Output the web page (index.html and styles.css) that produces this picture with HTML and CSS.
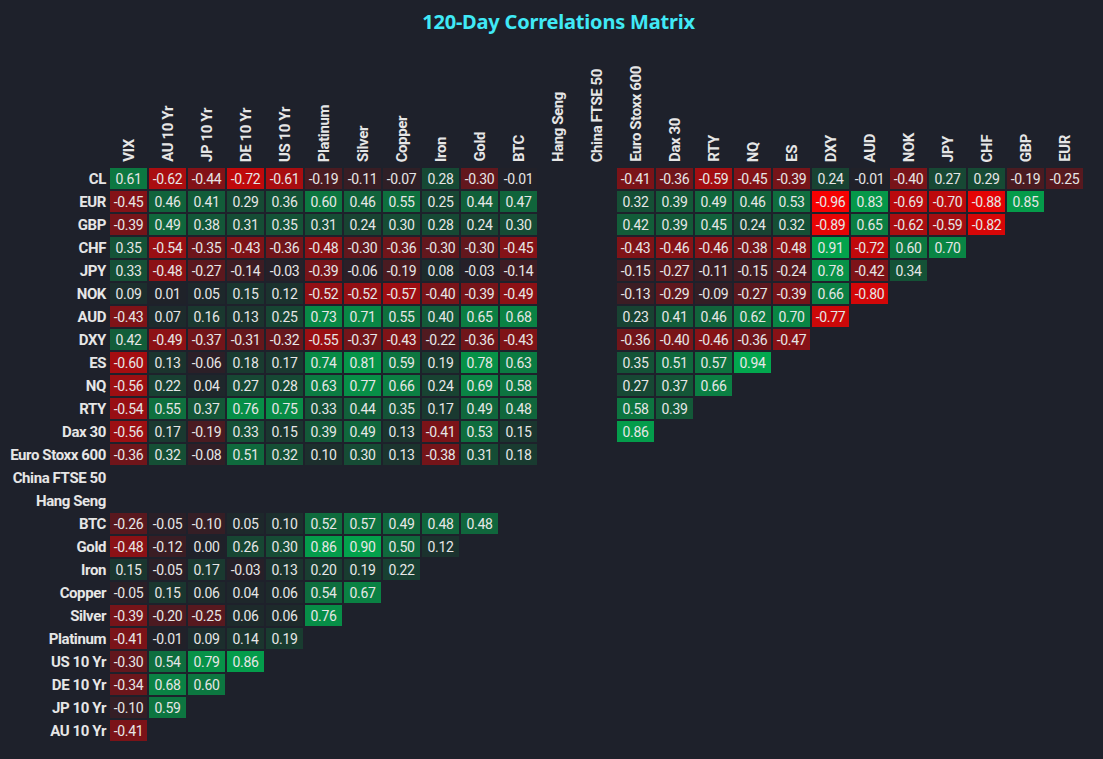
FILE: index.html
```html
<!DOCTYPE html>
<html lang="en">
<head>
<meta charset="utf-8">
<title>120-Day Correlations Matrix</title>
<link rel="stylesheet" href="styles.css">
</head>
<body>
<h1 class="title">120-Day Correlations Matrix</h1>
<div class="matrix" id="matrix"></div>
<script src="script.js"></script>
</body>
</html>
```

FILE: styles.css
```css
body {
  margin: 0;
  background: #1e212b;
  font-family: Roboto, "Liberation Sans", sans-serif;
  color: #e6e6e6;
}
.title {
  margin: 10px 0 0;
  padding-left: 14px;
  text-align: center;
  font-family: "Noto Sans", "Liberation Sans", sans-serif;
  font-weight: 700;
  font-size: 20px;
  line-height: 24px;
  letter-spacing: -0.2px;
  color: #40e9f6;
}
.matrix {
  display: grid;
  grid-template-columns: 108px repeat(25, 37px);
  grid-template-rows: 132px;
  grid-auto-rows: 21px;
  gap: 2px;
}
.col-head {
  display: flex;
  align-items: flex-end;
  justify-content: center;
  padding-bottom: 4px;
}
.col-head span {
  writing-mode: vertical-rl;
  transform: rotate(180deg);
  font-weight: 700;
  font-size: 15px;
  letter-spacing: -0.4px;
  white-space: nowrap;
  color: #e6e6e6;
}
.row-head {
  display: flex;
  align-items: center;
  justify-content: flex-end;
  padding-right: 2px;
  font-weight: 700;
  font-size: 15px;
  letter-spacing: -0.4px;
  white-space: nowrap;
  color: #e6e6e6;
}
.cell {
  display: flex;
  align-items: center;
  justify-content: center;
  font-size: 14px;
  letter-spacing: -0.3px;
  color: #e6e6e6;
}
```

FILE: script.js
```javascript
(function () {
  var cols = ["VIX","AU 10 Yr","JP 10 Yr","DE 10 Yr","US 10 Yr","Platinum","Silver","Copper","Iron","Gold","BTC","Hang Seng","China FTSE 50","Euro Stoxx 600","Dax 30","RTY","NQ","ES","DXY","AUD","NOK","JPY","CHF","GBP","EUR"];
  var n = null;
  var rows = [
    ["CL", [0.61,-0.62,-0.44,-0.72,-0.61,-0.19,-0.11,-0.07,0.28,-0.30,-0.01,n,n,-0.41,-0.36,-0.59,-0.45,-0.39,0.24,-0.01,-0.40,0.27,0.29,-0.19,-0.25]],
    ["EUR", [-0.45,0.46,0.41,0.29,0.36,0.60,0.46,0.55,0.25,0.44,0.47,n,n,0.32,0.39,0.49,0.46,0.53,-0.96,0.83,-0.69,-0.70,-0.88,0.85]],
    ["GBP", [-0.39,0.49,0.38,0.31,0.35,0.31,0.24,0.30,0.28,0.24,0.30,n,n,0.42,0.39,0.45,0.24,0.32,-0.89,0.65,-0.62,-0.59,-0.82]],
    ["CHF", [0.35,-0.54,-0.35,-0.43,-0.36,-0.48,-0.30,-0.36,-0.30,-0.30,-0.45,n,n,-0.43,-0.46,-0.46,-0.38,-0.48,0.91,-0.72,0.60,0.70]],
    ["JPY", [0.33,-0.48,-0.27,-0.14,-0.03,-0.39,-0.06,-0.19,0.08,-0.03,-0.14,n,n,-0.15,-0.27,-0.11,-0.15,-0.24,0.78,-0.42,0.34]],
    ["NOK", [0.09,0.01,0.05,0.15,0.12,-0.52,-0.52,-0.57,-0.40,-0.39,-0.49,n,n,-0.13,-0.29,-0.09,-0.27,-0.39,0.66,-0.80]],
    ["AUD", [-0.43,0.07,0.16,0.13,0.25,0.73,0.71,0.55,0.40,0.65,0.68,n,n,0.23,0.41,0.46,0.62,0.70,-0.77]],
    ["DXY", [0.42,-0.49,-0.37,-0.31,-0.32,-0.55,-0.37,-0.43,-0.22,-0.36,-0.43,n,n,-0.36,-0.40,-0.46,-0.36,-0.47]],
    ["ES", [-0.60,0.13,-0.06,0.18,0.17,0.74,0.81,0.59,0.19,0.78,0.63,n,n,0.35,0.51,0.57,0.94]],
    ["NQ", [-0.56,0.22,0.04,0.27,0.28,0.63,0.77,0.66,0.24,0.69,0.58,n,n,0.27,0.37,0.66]],
    ["RTY", [-0.54,0.55,0.37,0.76,0.75,0.33,0.44,0.35,0.17,0.49,0.48,n,n,0.58,0.39]],
    ["Dax 30", [-0.56,0.17,-0.19,0.33,0.15,0.39,0.49,0.13,-0.41,0.53,0.15,n,n,0.86]],
    ["Euro Stoxx 600", [-0.36,0.32,-0.08,0.51,0.32,0.10,0.30,0.13,-0.38,0.31,0.18]],
    ["China FTSE 50", []],
    ["Hang Seng", []],
    ["BTC", [-0.26,-0.05,-0.10,0.05,0.10,0.52,0.57,0.49,0.48,0.48]],
    ["Gold", [-0.48,-0.12,0.00,0.26,0.30,0.86,0.90,0.50,0.12]],
    ["Iron", [0.15,-0.05,0.17,-0.03,0.13,0.20,0.19,0.22]],
    ["Copper", [-0.05,0.15,0.06,0.04,0.06,0.54,0.67]],
    ["Silver", [-0.39,-0.20,-0.25,0.06,0.06,0.76]],
    ["Platinum", [-0.41,-0.01,0.09,0.14,0.19]],
    ["US 10 Yr", [-0.30,0.54,0.79,0.86]],
    ["DE 10 Yr", [-0.34,0.68,0.60]],
    ["JP 10 Yr", [-0.10,0.59]],
    ["AU 10 Yr", [-0.41]]
  ];
  var zero = [31, 33, 41];
  var pos = [0, 176, 80];
  var neg = [255, 0, 0];
  function color(v) {
    var t = Math.min(1, Math.abs(v));
    var target = v >= 0 ? pos : neg;
    var c = zero.map(function (z, i) { return Math.round(z + (target[i] - z) * t); });
    return "rgb(" + c.join(",") + ")";
  }
  var m = document.getElementById("matrix");
  var corner = document.createElement("div");
  corner.className = "corner";
  m.appendChild(corner);
  cols.forEach(function (c) {
    var d = document.createElement("div");
    d.className = "col-head";
    var s = document.createElement("span");
    s.textContent = c;
    d.appendChild(s);
    m.appendChild(d);
  });
  rows.forEach(function (r) {
    var h = document.createElement("div");
    h.className = "row-head";
    h.textContent = r[0];
    m.appendChild(h);
    for (var i = 0; i < cols.length; i++) {
      var v = r[1][i];
      var d = document.createElement("div");
      d.className = "cell";
      if (v !== undefined && v !== null) {
        d.textContent = v.toFixed(2);
        d.style.background = color(v);
      }
      m.appendChild(d);
    }
  });
})();
```
